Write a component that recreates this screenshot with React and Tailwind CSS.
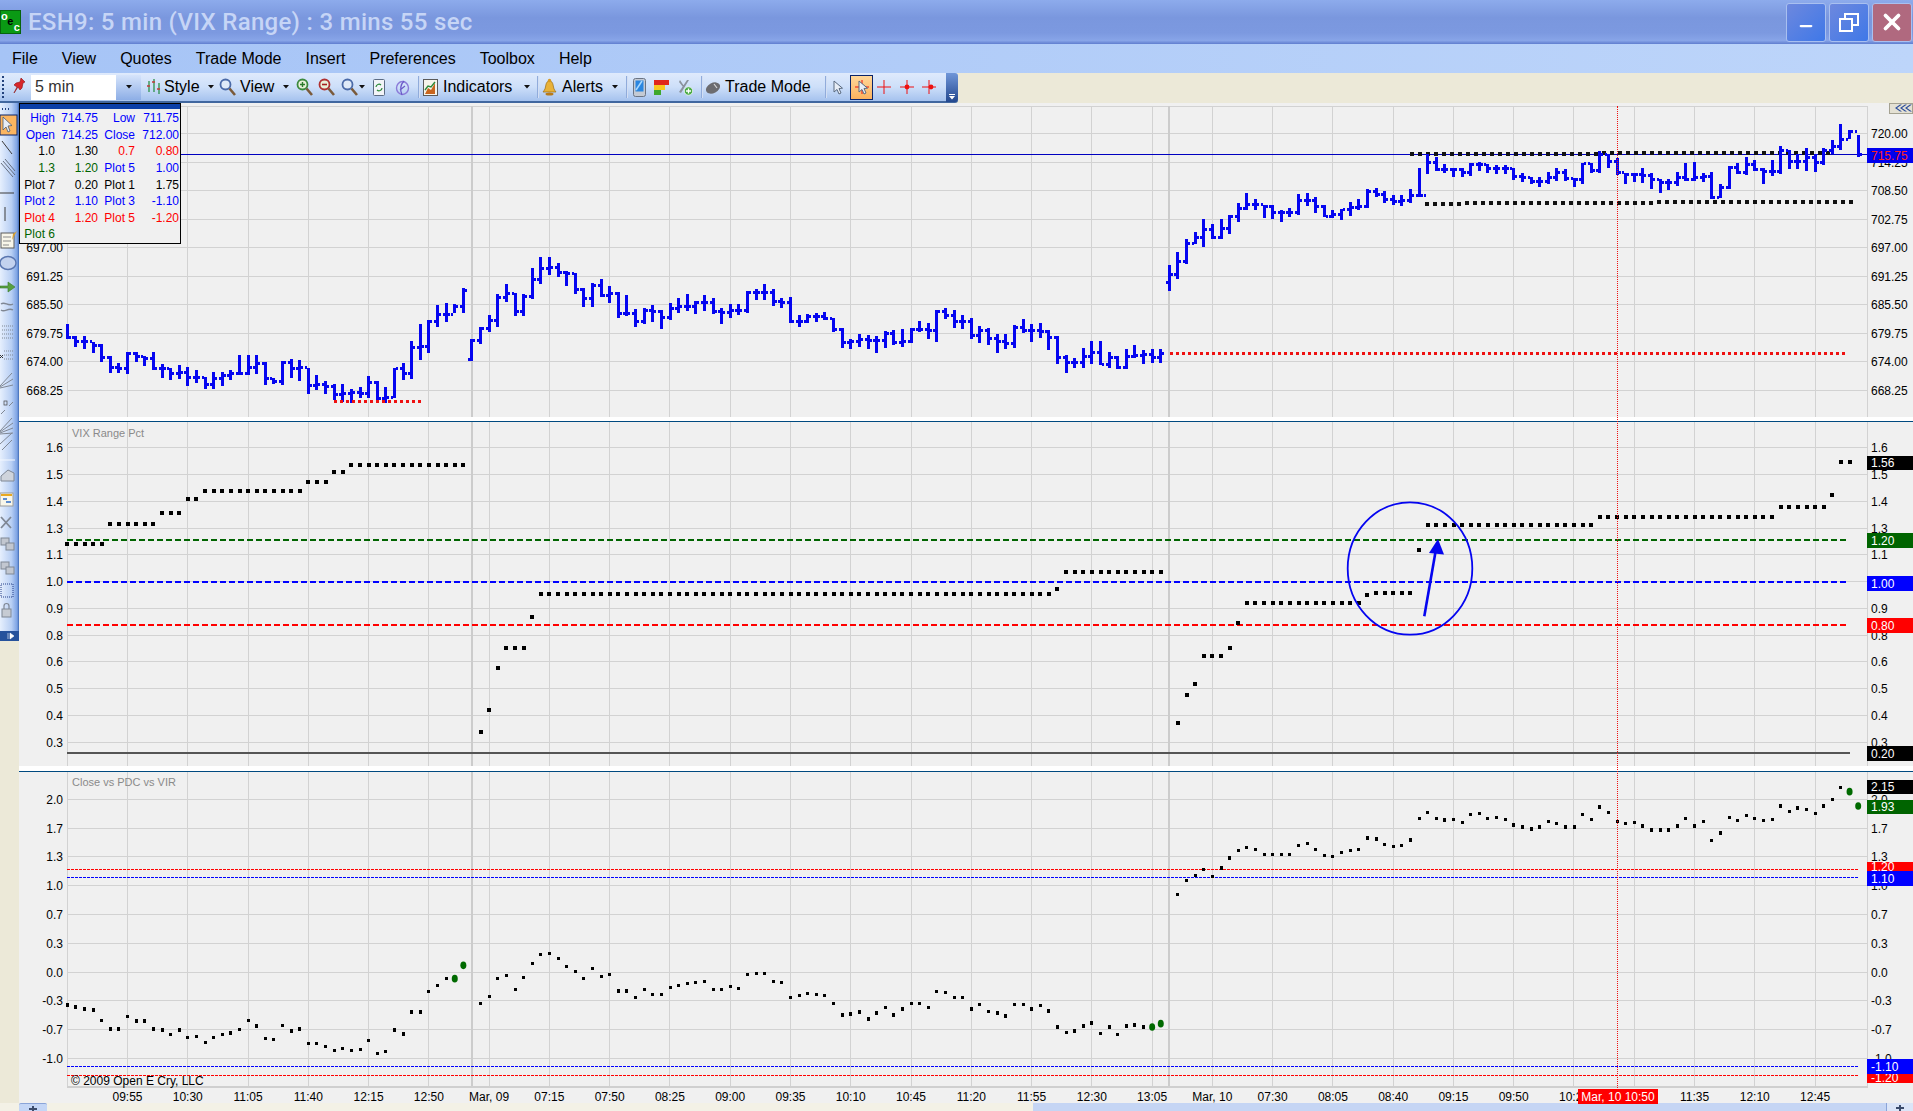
import { Minus, X } from 'lucide-react';

// y values read off the chart at 3x: [top, bottom, close, open?]
const BARS_A = [
  [220,265,258],[255,287,270],[255,295,272],[273,307,282],[280,333,318],[316,367,350],[335,365,352],[302,368,308],[302,333,315],[316,345,322],
  [303,357,352],[338,380,353],[352,386,367],[343,383,365],[348,404,380],[358,395,378],[377,415,400],[364,413,382],[362,404,373],[358,388,367],
  [313,372,367],[313,372,348],[313,368,338],[333,402,383],[380,400,390],[331,403,333],[323,380,353],[328,390,350],[350,430,402],[373,418,400],
  [391,430,405],[400,446,430],[400,452,428],[415,455,425],[407,442,427],[375,440,393],[391,448,442],[408,455,440],[350,442,352],[337,386,368],
  [270,383,288],[220,328,287],[208,305,210],[162,227,190],[157,212,190],[160,185,165],[110,185,118],[265,330,268,326],[227,278,232],[193,243,208],
  [130,228,140],[100,152,128],[125,195,182],[130,195,135],[52,145,85],[18,98,52],[18,72,50],[35,77,65],[60,105,68],[67,130,115],
  [110,167,143],[97,167,103],[83,137,133],[105,155,128],[122,200,187],[133,195,187],[175,227,212],[172,218,178],[163,212,182],[178,233,198],
  [155,207,172],[140,185,165],[130,180,165],[150,190,155],[133,180,155],[142,190,180],[172,218,183],[160,200,178],[160,193,177],[120,185,125],
  [115,147,125],[100,147,123],[115,165,150],[142,170,155],[138,215,210],[193,228,210],[190,215,197],[186,213,197],[183,208,203],[202,242,236],
  [232,290,273],[265,293,270],[250,287,265],[252,293,268],[256,305,268],[241,290,248],[238,282,275],[235,288,270],[232,275,235],[210,242,235],
  [215,265,238],[178,272,182],[172,203,192],[178,230,210],[193,233,210],[202,265,252],[226,275,238],[232,282,262],[250,305,270],[250,295,276],
  [223,292,228],[205,247,238],[220,272,238],[217,260,240],[238,296,258],[256,338,318],[313,365,335],[320,352,335],[290,352,315],[270,338,303],
  [270,343,340],[304,350,318],[316,355,348],[295,355,316],[283,320,313],[296,340,310],[295,335,320],[295,335,308],
];

const BARS_B = [
  [462,540,490,513],[423,505,450],[385,460,397],[363,400,380],[325,407,355],[340,385,378],[325,385,352],[312,368,317],[277,332,293],[247,296,280],
  [265,298,280],[282,320,287],[283,325,303],[298,332,303],[290,318,305],[250,313,268],[247,285,268],[258,305,285],[282,318,315],[296,320,310],
  [295,328,296],[272,315,288],[265,297,285],[235,290,240],[232,258,250],[240,275,265],[252,283,270],[252,285,268],[235,275,252],[170,258,253],
  [130,190,155],[138,180,175],[160,187,175],[172,197,175],[172,197,185],[157,195,160],[152,180,160],[158,187,172],[163,190,172],[163,190,172],
  [170,207,197],[187,212,200],[197,220,212],[198,228,212],[182,218,200],[172,210,185],[173,210,203],[200,228,205],[155,218,157],[155,187,178],
  [120,187,130],[128,170,150],[142,192,185],[185,218,190],[187,212,190],[170,217,192],[185,233,205],[205,245,215],[203,238,215],[182,226,200],
  [155,210,205],[153,210,200],[185,212,197],[182,265,260],[218,260,230],[165,235,168],[155,190,185],[138,192,160],[148,180,175],[170,218,180],
  [148,195,180],[105,190,118],[118,173,150],[128,175,150],[112,180,140],[130,182,155],[112,162,118],[88,130,105],[40,118,85],[58,85,62],[72,138,130],
];

// VIX range steps: [first bar, last bar, y]
const VIX_STEPS = [
  [0,4,542.7],[5,10,523.4],[11,13,512],[14,15,498],[16,27,490.4],[28,30,480.7],[31,32,471],[33,46,463.6],
  [48,48,731],[49,49,709],[50,50,667],[51,53,646.6],[54,54,616],[55,114,593],[115,115,588],[116,127,571],
  [129,129,722],[130,130,694],[131,131,683],[132,134,655],[135,135,647],[136,136,622],[137,150,601.7],[151,151,594],
  [152,156,591.7],[157,157,549],[158,177,523.7],[178,198,516.3],[199,204,506.3],[205,205,494],[206,207,461],
];

const CLOSE_A = [
  222,228,234,237,268,294,294,257,270,270,294,297,310,297,319,316,334,319,310,306,295,268,285,322,325,283,300,294,337,337,
  346,358,352,358,355,328,367,361,297,309,243,243,182,164,143,143,103,null,218,197,143,133,176,139,97,70,67,82,106,122,
  143,112,136,130,180,180,200,176,191,191,170,163,157,154,151,176,176,167,173,130,127,127,151,154,200,194,188,191,194,218,
  252,249,243,264,246,230,252,234,218,218,230,182,185,200,200,234,221,242,246,255,221,221,234,224,240,288,304,300,285,276,
  307,288,310,285,282,288,288,278,
];

const CLOSE_B = [
  371,328,313,295,316,291,261,239,229,236,251,251,251,251,223,217,236,254,257,244,239,236,201,204,220,226,223,207,143,124,
  143,147,146,155,130,127,143,140,146,162,168,174,168,152,158,168,168,130,146,108,124,152,158,155,165,177,177,177,165,143,
  165,152,208,186,140,149,133,143,149,146,105,121,111,115,127,105,86,49,62,105,
];

const GREEN_DOTS = [45, 46, 126, 127, 207, 208];

const TIMES = ['09:55','10:30','11:05','11:40','12:15','12:50','Mar, 09','07:15','07:50','08:25','09:00','09:35','10:10','10:45','11:20','11:55','12:30','13:05','Mar, 10','07:30','08:05','08:40','09:15','09:50','10:25','11:00','11:35','12:10','12:45'];

const barX = (i) => 67.3 + 8.61 * i;
const gridX = TIMES.map((_, k) => 127.5 + 60.27 * k);
const range = (a, b) => Array.from({ length: b - a + 1 }, (_, k) => a + k);

const bars = [
  ...BARS_A.map(([t, b, c, o]) => [250 + t / 3, 250 + b / 3, 250 + c / 3, o ? 250 + o / 3 : null]),
  ...BARS_B.map(([t, b, c, o]) => [110 + t / 3, 110 + b / 3, 110 + c / 3, o ? 110 + o / 3 : null]),
];

const closes = [
  ...CLOSE_A.map((v) => (v === null ? null : 930 + v / 3)),
  null,
  ...CLOSE_B.map((v) => 770 + v / 3),
];

function Grid({ top, bottom, rows }) {
  return (
    <g shapeRendering="crispEdges" stroke="#d2d2d2" strokeWidth="1">
      {rows.map((y) => <line key={y} x1="67" x2="1868" y1={y} y2={y} />)}
      {gridX.map((x) => <line key={x} x1={x} x2={x} y1={top} y2={bottom} />)}
      <line x1="67.5" x2="67.5" y1={top} y2={bottom} />
      <line x1="1867.5" x2="1867.5" y1={top} y2={bottom} />
      <line x1="472" x2="472" y1={top} y2={bottom} strokeWidth="2" stroke="#cccccc" />
      <line x1="1169" x2="1169" y1={top} y2={bottom} strokeWidth="2" stroke="#cccccc" />
    </g>
  );
}

function AxisLabels({ rows, leftFrom = 0, skipRight = [] }) {
  return rows.map(([y, label], k) => (
    <g key={y} className="text-[12px] fill-black">
      {k >= leftFrom && <text x="63" y={y + 0.5} textAnchor="end" dominantBaseline="central">{label}</text>}
      {!skipRight.includes(label) && <text x="1871" y={y + 0.5} dominantBaseline="central">{label}</text>}
    </g>
  ));
}

function Tag({ y, h = 15, bg, color = '#ffffff', children }) {
  return (
    <g>
      <rect x="1867" y={y} width="46" height={h} fill={bg} shapeRendering="crispEdges" />
      <text x="1871" y={y + h / 2} dominantBaseline="central" className="text-[12px]" fill={color}>{children}</text>
    </g>
  );
}

function DotRow({ x1, x2, y1, y2 = y1, step, w, h, fill }) {
  const n = Math.floor((x2 - x1) / step);
  return (
    <g fill={fill} shapeRendering="crispEdges">
      {range(0, n).map((k) => (
        <rect key={k} x={x1 + k * step} y={y1 + ((y2 - y1) * k) / n - h / 2} width={w} height={h} />
      ))}
    </g>
  );
}

function PricePane() {
  const labels = ['720.00','714.25','708.50','702.75','697.00','691.25','685.50','679.75','674.00','668.25'];
  const rows = labels.map((_, k) => 132.5 + 28.5 * k);
  return (
    <svg className="block" width="1894" height="314" viewBox="19 102 1894 314">
      <Grid top={105} bottom={416} rows={[105, ...rows]} />
      <AxisLabels rows={labels.map((l, k) => [rows[k], l])} leftFrom={4} />
      <line x1="67" x2="1868" y1="153.5" y2="153.5" stroke="#0000c0" strokeWidth="1.2" shapeRendering="crispEdges" />
      <DotRow x1={1410} x2={1833} y1={153.3} y2={151.5} step={8} w={4} h={4} fill="#111111" />
      <DotRow x1={1425} x2={1851} y1={202.7} y2={200.5} step={8} w={4} h={4} fill="#111111" />
      <g fill="#0505f0" shapeRendering="crispEdges">
        {bars.map(([t, b, c, o], i) => {
          const x = barX(i);
          const open = o ?? bars[i - 1]?.[2];
          return (
            <g key={i}>
              <rect x={x - 1.5} y={t} width="3" height={b - t} />
              {open != null && <rect x={x - 3.5} y={open - 1.5} width="2" height="3" />}
              <rect x={x + 1.5} y={c - 1.5} width="2" height="3" />
            </g>
          );
        })}
      </g>
      <DotRow x1={334} x2={419} y1={400.7} step={6} w={3} h={3} fill="#ee1111" />
      <DotRow x1={1170} x2={1843} y1={352.7} step={6} w={3} h={3} fill="#ee1111" />
      <Tag y={147} bg="#0000ee" color="#ff2020">715.75</Tag>
      <g>
        <rect x="1889.5" y="102.5" width="23" height="10" fill="#e4e1d4" stroke="#a5a292" />
        <path d="M1900 103.500l-5 3.500 5 3.500 2 0-5-3.500 5-3.500zM1905 103.500l-5 3.500 5 3.500 2 0-5-3.500 5-3.500zM1910 103.500l-5 3.500 5 3.500 2 0-5-3.500 5-3.500z" fill="#2d4f9c" />
      </g>
    </svg>
  );
}

function VixPane() {
  const labels = ['1.6','1.5','1.4','1.3','1.1','1.0','0.9','0.8','0.6','0.5','0.4','0.3'];
  const rows = labels.map((_, k) => 446.7 + 26.77 * k);
  return (
    <svg className="block" width="1894" height="344" viewBox="19 421 1894 344">
      <Grid top={421} bottom={765} rows={rows} />
      <AxisLabels rows={labels.map((l, k) => [rows[k], l])} skipRight={['1.0']} />
      <text x="72" y="432" dominantBaseline="central" className="text-[11px]" fill="#8a8a8a">VIX Range Pct</text>
      <g fill="none" strokeWidth="2" shapeRendering="crispEdges">
        <line x1="67" x2="1847" y1="539" y2="539" stroke="#006400" strokeDasharray="6 3" />
        <line x1="67" x2="1847" y1="580.7" y2="580.7" stroke="#0000ff" strokeDasharray="6 3" />
        <line x1="67" x2="1847" y1="624" y2="624" stroke="#ff0000" strokeDasharray="6 3" />
        <line x1="67" x2="1850" y1="752" y2="752" stroke="#555555" strokeWidth="1.5" />
      </g>
      <g fill="#000000" shapeRendering="crispEdges">
        {VIX_STEPS.flatMap(([a, b, y]) =>
          range(a, b).map((i) => <rect key={i} x={barX(i) - 2} y={y - 2} width="4" height="4" />)
        )}
      </g>
      <ellipse cx="1410" cy="567.5" rx="62.3" ry="66.2" fill="none" stroke="#0505f0" strokeWidth="1.8" />
      <line x1="1424.3" y1="615.3" x2="1436" y2="548" stroke="#0505f0" strokeWidth="2.6" />
      <polygon points="1438,538 1429,552 1444,553.5" fill="#0505f0" />
      <Tag y={455} h={14} bg="#000000">1.56</Tag>
      <Tag y={532} bg="#006400">1.20</Tag>
      <Tag y={575} bg="#0000ff">1.00</Tag>
      <Tag y={617} bg="#ff0000">0.80</Tag>
      <Tag y={745} bg="#000000">0.20</Tag>
    </svg>
  );
}

function ClosePane() {
  const labels = ['2.0','1.7','1.3','1.0','0.7','0.3','0.0','-0.3','-0.7','-1.0'];
  const rows = labels.map((_, k) => 798.3 + 28.8 * k);
  return (
    <svg className="block" width="1894" height="316" viewBox="19 771 1894 316">
      <Grid top={771} bottom={1085} rows={rows} />
      <line x1="67" x2="1868" y1="1086" y2="1086" stroke="#cfcfcf" strokeWidth="2" />
      <AxisLabels rows={labels.map((l, k) => [rows[k], l])} />
      <text x="72" y="781" dominantBaseline="central" className="text-[11px]" fill="#8a8a8a">Close vs PDC vs VIR</text>
      <g fill="none" strokeWidth="1.2" strokeDasharray="3 1" shapeRendering="crispEdges">
        <line x1="67" x2="1859" y1="868.7" y2="868.7" stroke="#ff0000" />
        <line x1="67" x2="1859" y1="876.3" y2="876.3" stroke="#0000ff" />
        <line x1="67" x2="1859" y1="1065.3" y2="1065.3" stroke="#0000ff" />
        <line x1="67" x2="1859" y1="1074.3" y2="1074.3" stroke="#ff0000" />
      </g>
      <text x="71" y="1080" dominantBaseline="central" className="text-[12px] fill-black">© 2009 Open E Cry, LLC</text>
      {closes.map((y, i) => {
        if (y === null || y === undefined) return null;
        if (GREEN_DOTS.includes(i)) return <ellipse key={i} cx={barX(i)} cy={y} rx="3" ry="3.8" fill="#006a00" />;
        return <rect key={i} x={barX(i) - 1.5} y={y - 1.8} width="3" height="3.6" fill="#000000" shapeRendering="crispEdges" />;
      })}
      <Tag y={779} h={14} bg="#000000">2.15</Tag>
      <Tag y={799} h={14} bg="#006400">1.93</Tag>
      <Tag y={861} h={10} bg="#ff0000">1.20</Tag>
      <Tag y={870} h={15} bg="#0000ff">1.10</Tag>
      <Tag y={1072} h={10} bg="#ff0000">-1.20</Tag>
      <Tag y={1058} h={15} bg="#0000ff">-1.10</Tag>
    </svg>
  );
}

function TimeAxis() {
  return (
    <svg className="block" width="1894" height="16" viewBox="19 1087 1894 16">
      {TIMES.map((t, k) => (
        t !== '11:00' && <text key={t + k} x={gridX[k]} y="1096" textAnchor="middle" dominantBaseline="central" className="text-[12px] fill-black">{t}</text>
      ))}
      <rect x="1578" y="1087.5" width="80" height="15" fill="#ff0000" shapeRendering="crispEdges" />
      <text x="1618" y="1096" textAnchor="middle" dominantBaseline="central" className="text-[12px] fill-white">Mar, 10 10:50</text>
    </svg>
  );
}

const LEGEND = [
  [['High','#0000ff'],['714.75','#0000ff'],['Low','#0000ff'],['711.75','#0000ff']],
  [['Open','#0000ff'],['714.25','#0000ff'],['Close','#0000ff'],['712.00','#0000ff']],
  [['1.0','#000000'],['1.30','#000000'],['0.7','#ff0000'],['0.80','#ff0000']],
  [['1.3','#006400'],['1.20','#006400'],['Plot 5','#0000ff'],['1.00','#0000ff']],
  [['Plot 7','#000000'],['0.20','#000000'],['Plot 1','#000000'],['1.75','#000000']],
  [['Plot 2','#0000ff'],['1.10','#0000ff'],['Plot 3','#0000ff'],['-1.10','#0000ff']],
  [['Plot 4','#ff0000'],['1.20','#ff0000'],['Plot 5','#ff0000'],['-1.20','#ff0000']],
  [['Plot 6','#006400']],
];

function Legend() {
  return (
    <div className="absolute left-0 top-0 w-[162px] h-[141px] border border-black bg-[#f0f0f0]">
      <div className="h-[5px] bg-[#0b3fa8]" />
      <div className="grid grid-cols-[35px_43px_37px_44px] auto-rows-[16.6px] items-center pt-[1px] text-[12px] leading-none text-right">
        {LEGEND.flatMap((row, r) =>
          row.map(([text, color], c) => (
            <span key={r + '-' + c} style={{ color }}>{text}</span>
          ))
        )}
      </div>
    </div>
  );
}

function Caret() {
  return (
    <svg width="6" height="4" viewBox="0 0 6 4"><path d="M0 0h6L3 3.5z" fill="#111" /></svg>
  );
}

function Sep() {
  return <span className="w-[2px] h-[22px] bg-[linear-gradient(to_right,#6f92cf,#f4f8ff)]" />;
}

function Ico({ w = 16, h = 18, className, children }) {
  return (
    <svg width={w} height={h} viewBox={`0 0 ${w} ${h}`} className={'shrink-0 ' + (className || '')}>{children}</svg>
  );
}

function Mag({ mark }) {
  return (
    <Ico w={17} h={19}>
      <circle cx="6.5" cy="6.5" r="5" fill={mark === 'none' ? '#dfeaf8' : '#e8f0d8'} stroke={mark === 'minus' ? '#b03030' : mark === 'plus' ? '#3d8a3d' : '#4a6aa8'} strokeWidth="1.8" />
      <line x1="10.5" y1="10.5" x2="16" y2="17" stroke="#7a5a3a" strokeWidth="2.6" />
      {mark === 'plus' && <path d="M4 6.5h5M6.5 4v5" stroke="#2c7a2c" strokeWidth="1.4" />}
      {mark === 'minus' && <path d="M4 6.5h5" stroke="#a52020" strokeWidth="1.6" />}
    </Ico>
  );
}

function Cross({ dot, left }) {
  return (
    <Ico w={16} h={18}>
      <path d="M8 2v14M1 9h14" stroke="#ee1111" strokeWidth="1" />
      {dot && <circle cx={left ? 10 : 8} cy="9" r="2.4" fill="#ee1111" />}
    </Ico>
  );
}

function Cursor({ w = 10, h = 15 }) {
  return (
    <svg width={w} height={h} viewBox="0 0 10 15" className="shrink-0">
      <path d="M1 1l0 11 3-2.5 2 4.5 2-1-2-4.5 3.5-.3z" fill="#e8eef6" stroke="#5a6a80" strokeWidth="1" />
    </svg>
  );
}

function Toolbar() {
  return (
    <div className="w-[958px] h-[30px] flex items-center rounded-r-[3px] border-b-2 border-[#41679f] bg-[linear-gradient(to_bottom,#dfeafc,#cddff9_50%,#a5c2ee)] text-[16px] leading-none text-black">
      <span className="ml-[2px] w-[2px] h-[22px] border-l-2 border-dotted border-[#23427c]" />
      <Ico w={14} h={20} className="ml-[8px]">
        <path d="M9 1l4 4-2 1-1 5-2 2-2-3-4 6 3-6-3-2 2-2 4-1z" fill="#d8262a" stroke="#8b1010" strokeWidth=".6" />
      </Ico>
      <span className="ml-[5px] w-[85px] h-[25px] flex items-center pl-[4px] bg-white text-[#333333]">5 min</span>
      <span className="w-[25px] h-[25px] flex items-center justify-center bg-[linear-gradient(to_bottom,#d6e4fb,#8daee6)]"><Caret /></span>
      <Ico w={16} h={18} className="ml-[5px]">
        <path d="M3 3v11M8 1v13M13 5v11" stroke="#1f8a3a" strokeWidth="1.2" />
        <path d="M1 8h3M6 4h3M11 11h3" stroke="#c23a3a" strokeWidth="1.4" />
      </Ico>
      <span className="ml-[2px] w-[37px]">Style</span>
      <span className="ml-[7px] flex"><Caret /></span>
      <span className="ml-[5px] flex"><Mag mark="none" /></span>
      <span className="ml-[4px] w-[35px]">View</span>
      <span className="ml-[8px] flex"><Caret /></span>
      <span className="ml-[7px] flex"><Mag mark="plus" /></span>
      <span className="ml-[5px] flex"><Mag mark="minus" /></span>
      <span className="ml-[6px] flex"><Mag mark="none" /></span>
      <span className="ml-[1px] flex"><Caret /></span>
      <Ico w={12} h={17} className="ml-[8px]">
        <rect x=".5" y=".5" width="11" height="16" rx="1" fill="#f2f4f8" stroke="#5c6c84" />
        <path d="M3 8a3 3 0 0 1 5-2M9 9a3 3 0 0 1-5 2" stroke="#2c8a3a" fill="none" strokeWidth="1.2" />
      </Ico>
      <Ico w={15} h={17} className="ml-[10px]">
        <ellipse cx="7.5" cy="9" rx="6" ry="6.5" fill="none" stroke="#8a7ad8" strokeWidth="1.4" />
        <path d="M9 2C5 6 5 11 7 16M10 7l-5 4" stroke="#6a58c8" strokeWidth="1.2" fill="none" />
      </Ico>
      <span className="ml-[8px] flex"><Sep /></span>
      <Ico w={15} h={17} className="ml-[3px]">
        <rect x=".5" y=".5" width="14" height="16" fill="#f6f4ec" stroke="#5a5a5a" />
        <path d="M2 15l3-6 3 2 4-7v11z" fill="#c8651e" />
        <path d="M2 11l3-4 3 1 4-5" stroke="#2d8a3a" strokeWidth="1.4" fill="none" />
      </Ico>
      <span className="ml-[5px] w-[73px]">Indicators</span>
      <span className="ml-[8px] flex"><Caret /></span>
      <span className="ml-[7px] flex"><Sep /></span>
      <Ico w={15} h={18} className="ml-[3px]">
        <path d="M7.5 3c3 0 3.5 3 4 6s2 4 2.5 5H1c.5-1 2-2 2.500-5s1-6 4-6z" fill="#e8b23a" stroke="#9a6a10" strokeWidth=".7" />
        <circle cx="7.500" cy="2.500" r="1.700" fill="#d89a20" />
        <ellipse cx="7.500" cy="16" rx="4" ry="1.500" fill="#b87a18" />
      </Ico>
      <span className="ml-[5px] w-[43px]">Alerts</span>
      <span className="ml-[7px] flex"><Caret /></span>
      <span className="ml-[8px] flex"><Sep /></span>
      <Ico w={13} h={19} className="ml-[5px]">
        <rect x=".5" y=".5" width="12" height="18" rx="2" fill="#c4cad4" stroke="#6a7484" />
        <rect x="2.500" y="2.500" width="8" height="11" fill="#2a86e0" />
        <path d="M3 12l6-9" stroke="#a8d8ff" strokeWidth="1.500" />
      </Ico>
      <Ico w={15} h={15} className="ml-[8px]">
        <rect x="0" y="0" width="15" height="5" fill="#e0261c" />
        <rect x="0" y="5" width="11" height="5" fill="#f8c820" />
        <rect x="0" y="10" width="7" height="5" fill="#3ea82e" />
      </Ico>
      <Ico w={15} h={17} className="ml-[9px]">
        <path d="M2 1l4 6-1 1-4-5zM11 1l-8 13-2-1 8-12z" fill="#8b929c" />
        <circle cx="10.500" cy="12" r="4.200" fill="#4bab46" stroke="#fff" strokeWidth=".7" />
        <path d="M8 12h5M10.500 9.500v5" stroke="#fff" strokeWidth="1.300" />
      </Ico>
      <span className="ml-[8px] flex"><Sep /></span>
      <Ico w={17} h={13} className="ml-[2px]">
        <ellipse cx="8" cy="7" rx="7.500" ry="5" fill="#6c6c70" transform="rotate(-28 8 7)" />
        <path d="M9 3l3 4" stroke="#d6d6d6" strokeWidth="1.200" />
      </Ico>
      <span className="ml-[3px] w-[87px]">Trade Mode</span>
      <span className="ml-[13px] flex"><Sep /></span>
      <span className="ml-[6px] flex"><Cursor /></span>
      <span className="ml-[7px] w-[23px] h-[25px] relative flex items-center justify-center border border-[#0a246a] bg-[linear-gradient(to_bottom,#ffd79a,#fbb25e)]">
        <Cross />
        <span className="absolute left-[7px] top-[4px] flex"><Cursor /></span>
      </span>
      <span className="ml-[3px] flex"><Cross /></span>
      <span className="ml-[7px] flex"><Cross dot /></span>
      <span className="ml-[6px] flex"><Cross dot left /></span>
      <span className="ml-auto w-[12px] h-[29px] flex flex-col items-center justify-end pb-[2px] rounded-r-[3px] bg-[linear-gradient(to_bottom,#7096d8,#23488f)]">
        <span className="w-[6px] h-px bg-white mb-px" />
        <svg width="6" height="4" viewBox="0 0 6 4"><path d="M0 0h6L3 3.500z" fill="#fff" /></svg>
      </span>
    </div>
  );
}

function LeftTools() {
  const grey = '#7f8794';
  return (
    <div className="w-[19px] h-[538px] shrink-0 bg-[linear-gradient(to_right,#e6effd,#b8cff4_60%,#7da3e4_90%,#3f6ab4)]">
      <svg className="block" width="19" height="538" viewBox="0 102 19 538">
        <path d="M2 108h1M5 108h1M8 108h1" stroke="#23427c" strokeWidth="2" />
        <rect x="0" y="114" width="17" height="20" fill="#fbb560" stroke="#0a246a" />
        <path d="M3 116v13l3-3 2 5 2-1-2-5 4-.5z" fill="#e8eef6" stroke="#4a5a70" strokeWidth=".8" />
        <path d="M2 140l10 13" stroke="#3a3a3a" strokeWidth="1" />
        <path d="M1 162l12 14M3 160l12 14M5 158l10 12" stroke="#5a6270" strokeWidth=".9" />
        <path d="M0 192h14" stroke="#3a3a3a" />
        <path d="M5 206v14" stroke="#3a3a3a" />
        <rect x="1" y="232" width="13" height="15" fill="#f8f6ea" stroke="#5a5a5a" />
        <path d="M3 236h8M3 240h8M3 244h6" stroke="#8a8a8a" />
        <path d="M13 233l4-3-5 9z" fill="#d8a030" />
        <ellipse cx="8" cy="262" rx="8" ry="6.500" fill="#c3d2ef" stroke="#5a76b0" strokeWidth="1.400" />
        <path d="M0 285h8v-4l7 5-7 5v-4H0z" fill="#58a040" stroke="#3a7a28" strokeWidth=".6" />
        <path d="M1 303c4-3 7 3 12 0M1 309c4 3 7-3 12 0" stroke={grey} fill="none" strokeWidth="1.400" />
        <path d="M2 325h11M2 329h11M2 333h11M2 337h11" stroke={grey} strokeDasharray="1 1" />
        <path d="M4 350h9M4 354h9M4 358h9" stroke={grey} strokeDasharray="1 1" />
        <path d="M0 357l3-3M0 354l3 3" stroke="#333" />
        <path d="M0 385l12-13M0 386l13-8M0 387l13-3" stroke={grey} />
        <path d="M1 413l4-4M9 405l4-4" stroke={grey} />
        <rect x="4" y="400" width="3" height="4" fill="none" stroke="#444" strokeWidth=".7" />
        <path d="M0 430l12-13M0 431l13-9M0 432l13-5M0 433l13-1" stroke={grey} />
        <path d="M0 443l12-11M2 449l10-10" stroke={grey} />
        <path d="M0 459h15" stroke="#f4f8ff" />
        <path d="M1 475l7-6 6 3v8H1z" fill="#cfd4dc" stroke={grey} />
        <rect x="0" y="492" width="13" height="13" fill="#f8f6ea" stroke="#9a9a9a" />
        <path d="M1 494h11" stroke="#e8a820" strokeWidth="2" />
        <path d="M3 498h4M6 501h5" stroke="#2a6ac8" strokeWidth="1.500" />
        <path d="M1 516l10 11M11 516L1 527" stroke={grey} strokeWidth="1.800" />
        <rect x="1" y="537" width="8" height="7" fill="#c2c7d0" stroke={grey} />
        <rect x="6" y="542" width="8" height="7" fill="#c2c7d0" stroke={grey} />
        <rect x="1" y="561" width="8" height="7" fill="#c2c7d0" stroke={grey} />
        <rect x="6" y="566" width="8" height="7" fill="#c2c7d0" stroke={grey} />
        <rect x="1" y="583" width="12" height="13" fill="none" stroke="#27408a" strokeDasharray="1 1" />
        <rect x="2" y="608" width="9" height="8" fill="#c6cbd3" stroke={grey} />
        <path d="M4 608v-3a2.500 2.500 0 0 1 5 0v3" fill="none" stroke={grey} strokeWidth="1.200" />
        <rect x="0" y="630" width="19" height="10" fill="#26529c" />
        <path d="M8 632v6M10 632l4 3-4 3z" fill="#ffffff" stroke="#ffffff" strokeWidth=".6" />
      </svg>
    </div>
  );
}

function WindowButton({ close, children }) {
  return (
    <span className={'w-[40px] h-[39px] flex items-center justify-center rounded-[3px] border border-[#a9c0f0] text-white ' + (close ? 'bg-[#b0697f]' : 'bg-[linear-gradient(135deg,#6d88de,#3f78e8)]')}>
      {children}
    </span>
  );
}

function TabPlus() {
  return (
    <svg width="14" height="8" viewBox="0 0 14 8"><path d="M7 2v6M3 5h8" stroke="#3c4c6c" strokeWidth="2" /></svg>
  );
}

export default function App() {
  const menus = ['File', 'View', 'Quotes', 'Trade Mode', 'Insert', 'Preferences', 'Toolbox', 'Help'];
  return (
    <div className="w-[1913px] h-[1111px] overflow-hidden flex flex-col bg-[#ece9d8] font-['Liberation_Sans',Arial,sans-serif]">
      {/* Title bar */}
      <div className="h-[44px] shrink-0 flex items-center bg-[linear-gradient(to_bottom,#8dabec,#7a97de_40%,#7c99e0_75%,#88a5e8_92%,#5f7dcf)]">
        <span className="w-[21px] h-[24px] grid grid-cols-3 bg-[#0a9a14] border border-[#06640c] text-[11px] font-bold leading-none">
          <span className="text-white">o</span>
          <span className="text-black pt-[5px]">e</span>
          <span className="text-white pt-[11px]">c</span>
        </span>
        <span className="ml-[7px] text-[#c6d5f6] text-[24px] font-medium font-['Roboto',sans-serif] tracking-[0.3px]">ESH9: 5 min (VIX Range) : 3 mins 55 sec</span>
        <div className="ml-auto mr-[1px] flex gap-[3px]">
          <WindowButton><Minus size={18} strokeWidth={3} className="mt-[8px]" /></WindowButton>
          <WindowButton>
            <svg width="20" height="20" viewBox="0 0 20 20" fill="none" stroke="#fff" strokeWidth="2">
              <rect x="1" y="7" width="12" height="12" />
              <path d="M6 7V2h13v11h-5" />
            </svg>
          </WindowButton>
          <WindowButton close><X size={26} strokeWidth={3.5} /></WindowButton>
        </div>
      </div>

      {/* Menu bar */}
      <div className="h-[29px] shrink-0 flex items-center gap-[24px] pl-3 text-[16px] text-black bg-gradient-to-r from-[#a6c4f6] to-[#bdd5fa]">
        {menus.map((m) => <span key={m}>{m}</span>)}
      </div>

      <div className="h-[30px] shrink-0 flex bg-[#ece9d8]">
        <Toolbar />
      </div>

      <div className="flex-1 min-h-0 flex">
        <div className="w-[19px] shrink-0 flex flex-col bg-[#ece9d8]">
          <LeftTools />
        </div>
        <div className="relative flex-1 bg-[#f0f0f0]">
          <PricePane />
          <div className="h-[4px] bg-white" />
          <div className="h-[1px] bg-[#004a80] rounded-l-sm" />
          <VixPane />
          <div className="h-[5px] bg-white" />
          <div className="h-[1px] bg-[#004a80]" />
          <ClosePane />
          <TimeAxis />
          <Legend />
          <div className="absolute left-[1598px] top-[3px] h-[982px] border-l border-dotted border-[#ee1111]" />
        </div>
      </div>

      {/* Bottom tab strip */}
      <div className="h-[8px] shrink-0 flex bg-[#f3f1e6]">
        <span className="ml-[19px] w-[28px] h-[8px] flex justify-center rounded-t-[2px] bg-[#c4d6f6] border-t border-[#8aa4d8] overflow-hidden"><TabPlus /></span>
        <span className="ml-[986px] flex-1 flex justify-end bg-[#c5d5f4]">
          <span className="w-[27px] flex justify-center bg-[#dbe5f8] border-l border-[#8aa4d8] overflow-hidden"><TabPlus /></span>
        </span>
      </div>
    </div>
  );
}
